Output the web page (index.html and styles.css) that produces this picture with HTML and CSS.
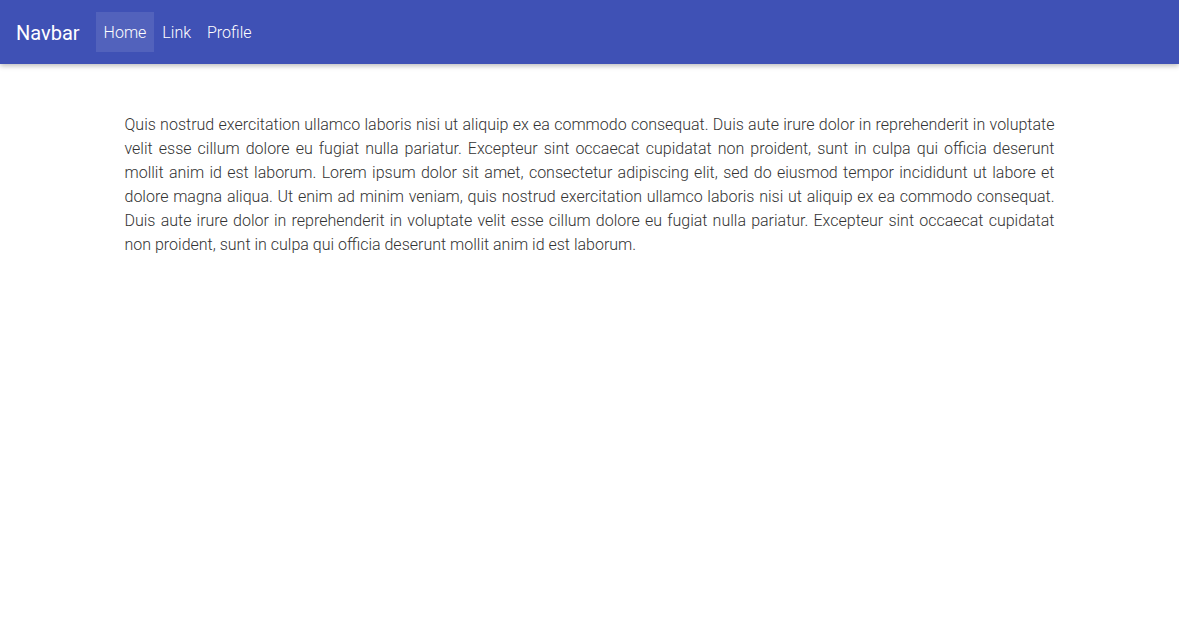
FILE: index.html
```html
<!DOCTYPE html>
<html lang="en">
<head>
    <meta charset="UTF-8">
    <meta name="viewport" content="width=device-width, initial-scale=1.0">
    <title>Navbar</title>
    <link rel="stylesheet" href="styles.css">
</head>
<body>

    <!-- Barra de navegação -->
    <nav class="navbar">
        <a class="navbar-brand" href="#">Navbar</a>
        <ul class="navbar-nav">
            <li><a class="nav-link active" href="#">Home</a></li>
            <li><a class="nav-link" href="#">Link</a></li>
            <li><a class="nav-link" href="#">Profile</a></li>
        </ul>
    </nav>

    <!-- Conteúdo -->
    <main class="container">
        <p>Quis nostrud exercitation ullamco laboris nisi ut aliquip ex ea commodo consequat. Duis aute irure dolor in reprehenderit in voluptate velit esse cillum dolore eu fugiat nulla pariatur. Excepteur sint occaecat cupidatat non proident, sunt in culpa qui officia deserunt mollit anim id est laborum. Lorem ipsum dolor sit amet, consectetur adipiscing elit, sed do eiusmod tempor incididunt ut labore et dolore magna aliqua. Ut enim ad minim veniam, quis nostrud exercitation ullamco laboris nisi ut aliquip ex ea commodo consequat. Duis aute irure dolor in reprehenderit in voluptate velit esse cillum dolore eu fugiat nulla pariatur. Excepteur sint occaecat cupidatat non proident, sunt in culpa qui officia deserunt mollit anim id est laborum.</p>
    </main>

</body>
</html>
```

FILE: styles.css
```css
body {
    margin: 0;
    font-family: Roboto, "Noto Sans", sans-serif;
    font-weight: 300;
    font-size: 16px;
    line-height: 24px;
    color: #333;
    background-color: #fff;
}
.navbar {
    display: flex;
    align-items: center;
    height: 64px;
    padding: 0 16px;
    background-color: #3f51b5; /* Indigo */
    box-shadow: 0 2px 5px rgba(0, 0, 0, 0.26);
    position: relative;
}
.navbar a {
    text-decoration: none;
    color: #fff;
}
.navbar-brand {
    font-size: 20px;
    font-weight: 400;
    padding-top: 2px;
    margin-right: 16px;
}
.navbar-nav {
    display: flex;
    list-style: none;
    margin: 0;
    padding: 0;
}
.nav-link {
    display: block;
    padding: 9px 8px 7px;
    font-size: 16px;
    line-height: 24px;
}
.nav-link.active {
    background-color: rgba(255, 255, 255, 0.1);
}
.container {
    max-width: 930px;
    margin: 0 auto;
    padding: 49px 15px 48px;
}
.container p {
    margin: 0;
    text-align: justify;
}
```
